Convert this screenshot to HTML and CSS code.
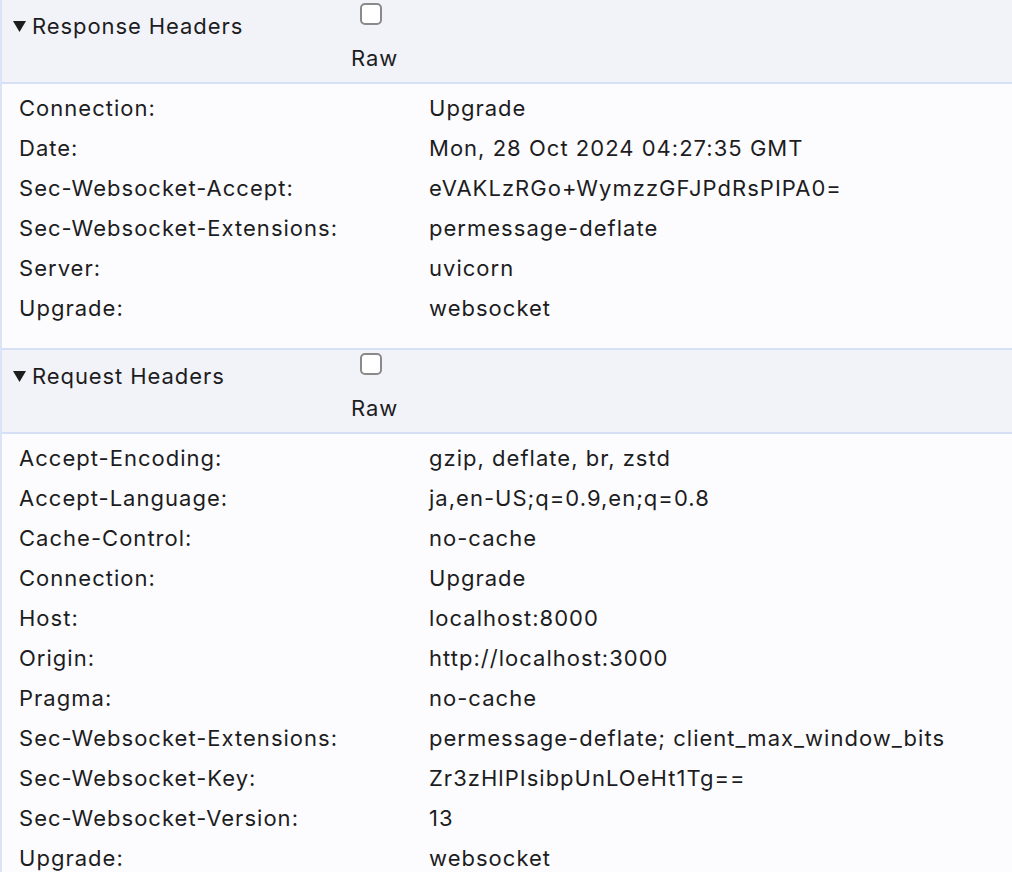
FILE: index.html
```html
<!DOCTYPE html>
<html>
<head>
<meta charset="utf-8">
<link rel="stylesheet" href="styles.css">
</head>
<body>
<div class="section">
  <div class="sec-head">
    <div class="title"><svg class="tri" width="13" height="11" viewBox="0 0 13 11"><path d="M0 0H13L6.5 11Z" fill="#1d1d1f"/></svg>Response Headers</div>
    <label class="raw"><span class="box"></span><span class="raw-text">Raw</span></label>
  </div>
  <div class="rows">
    <div class="row"><span class="k">Connection:</span><span class="v">Upgrade</span></div>
    <div class="row"><span class="k">Date:</span><span class="v">Mon, 28 Oct 2024 04:27:35 GMT</span></div>
    <div class="row"><span class="k">Sec-Websocket-Accept:</span><span class="v">eVAKLzRGo+WymzzGFJPdRsPIPA0=</span></div>
    <div class="row"><span class="k">Sec-Websocket-Extensions:</span><span class="v">permessage-deflate</span></div>
    <div class="row"><span class="k">Server:</span><span class="v">uvicorn</span></div>
    <div class="row"><span class="k">Upgrade:</span><span class="v">websocket</span></div>
  </div>
</div>
<div class="section">
  <div class="sec-head">
    <div class="title"><svg class="tri" width="13" height="11" viewBox="0 0 13 11"><path d="M0 0H13L6.5 11Z" fill="#1d1d1f"/></svg>Request Headers</div>
    <label class="raw"><span class="box"></span><span class="raw-text">Raw</span></label>
  </div>
  <div class="rows">
    <div class="row"><span class="k">Accept-Encoding:</span><span class="v">gzip, deflate, br, zstd</span></div>
    <div class="row"><span class="k">Accept-Language:</span><span class="v">ja,en-US;q=0.9,en;q=0.8</span></div>
    <div class="row"><span class="k">Cache-Control:</span><span class="v">no-cache</span></div>
    <div class="row"><span class="k">Connection:</span><span class="v">Upgrade</span></div>
    <div class="row"><span class="k">Host:</span><span class="v">localhost:8000</span></div>
    <div class="row"><span class="k">Origin:</span><span class="v">http://localhost:3000</span></div>
    <div class="row"><span class="k">Pragma:</span><span class="v">no-cache</span></div>
    <div class="row"><span class="k">Sec-Websocket-Extensions:</span><span class="v">permessage-deflate; client_max_window_bits</span></div>
    <div class="row"><span class="k">Sec-Websocket-Key:</span><span class="v">Zr3zHlPIsibpUnLOeHt1Tg==</span></div>
    <div class="row"><span class="k">Sec-Websocket-Version:</span><span class="v">13</span></div>
    <div class="row"><span class="k">Upgrade:</span><span class="v">websocket</span></div>
  </div>
</div>
</body>
</html>
```
FILE: styles.css
```css
html, body {
  margin: 0;
  padding: 0;
  background: #fcfcfe;
  color: #1d1d1f;
  font-family: Inter, "Liberation Sans", sans-serif;
  font-size: 22px;
  letter-spacing: 0.92px;
}
.section {
  border-left: 2px solid #dbe3f7;
}
.sec-head {
  height: 82px;
  background: #f2f3f8;
  border-bottom: 2px solid #d5e0f7;
  display: flex;
  align-items: flex-start;
  box-sizing: content-box;
}
.section + .section .sec-head {
  border-top: 2px solid #d5e0f7;
}
.title {
  width: 338px;
  padding-left: 11px;
  padding-top: 12px;
  line-height: 28px;
  display: flex;
  align-items: center;
}
.tri {
  margin-right: 6px;
  margin-top: 1px;
}
.raw {
  display: flex;
  flex-direction: column;
  align-items: flex-start;
}
.box {
  width: 18px;
  height: 18px;
  margin-top: 3px;
  margin-left: 9px;
  border: 2px solid #8a8a8a;
  border-radius: 5px;
  background: #ffffff;
}
.raw-text {
  margin-top: 19px;
  line-height: 28px;
}
.rows {
  padding: 4px 0 20px;
  letter-spacing: 1.02px;
}
.row {
  display: flex;
  height: 40px;
  align-items: center;
}
.k {
  width: 410px;
  padding-left: 17px;
}
.v {
  white-space: nowrap;
}
```
